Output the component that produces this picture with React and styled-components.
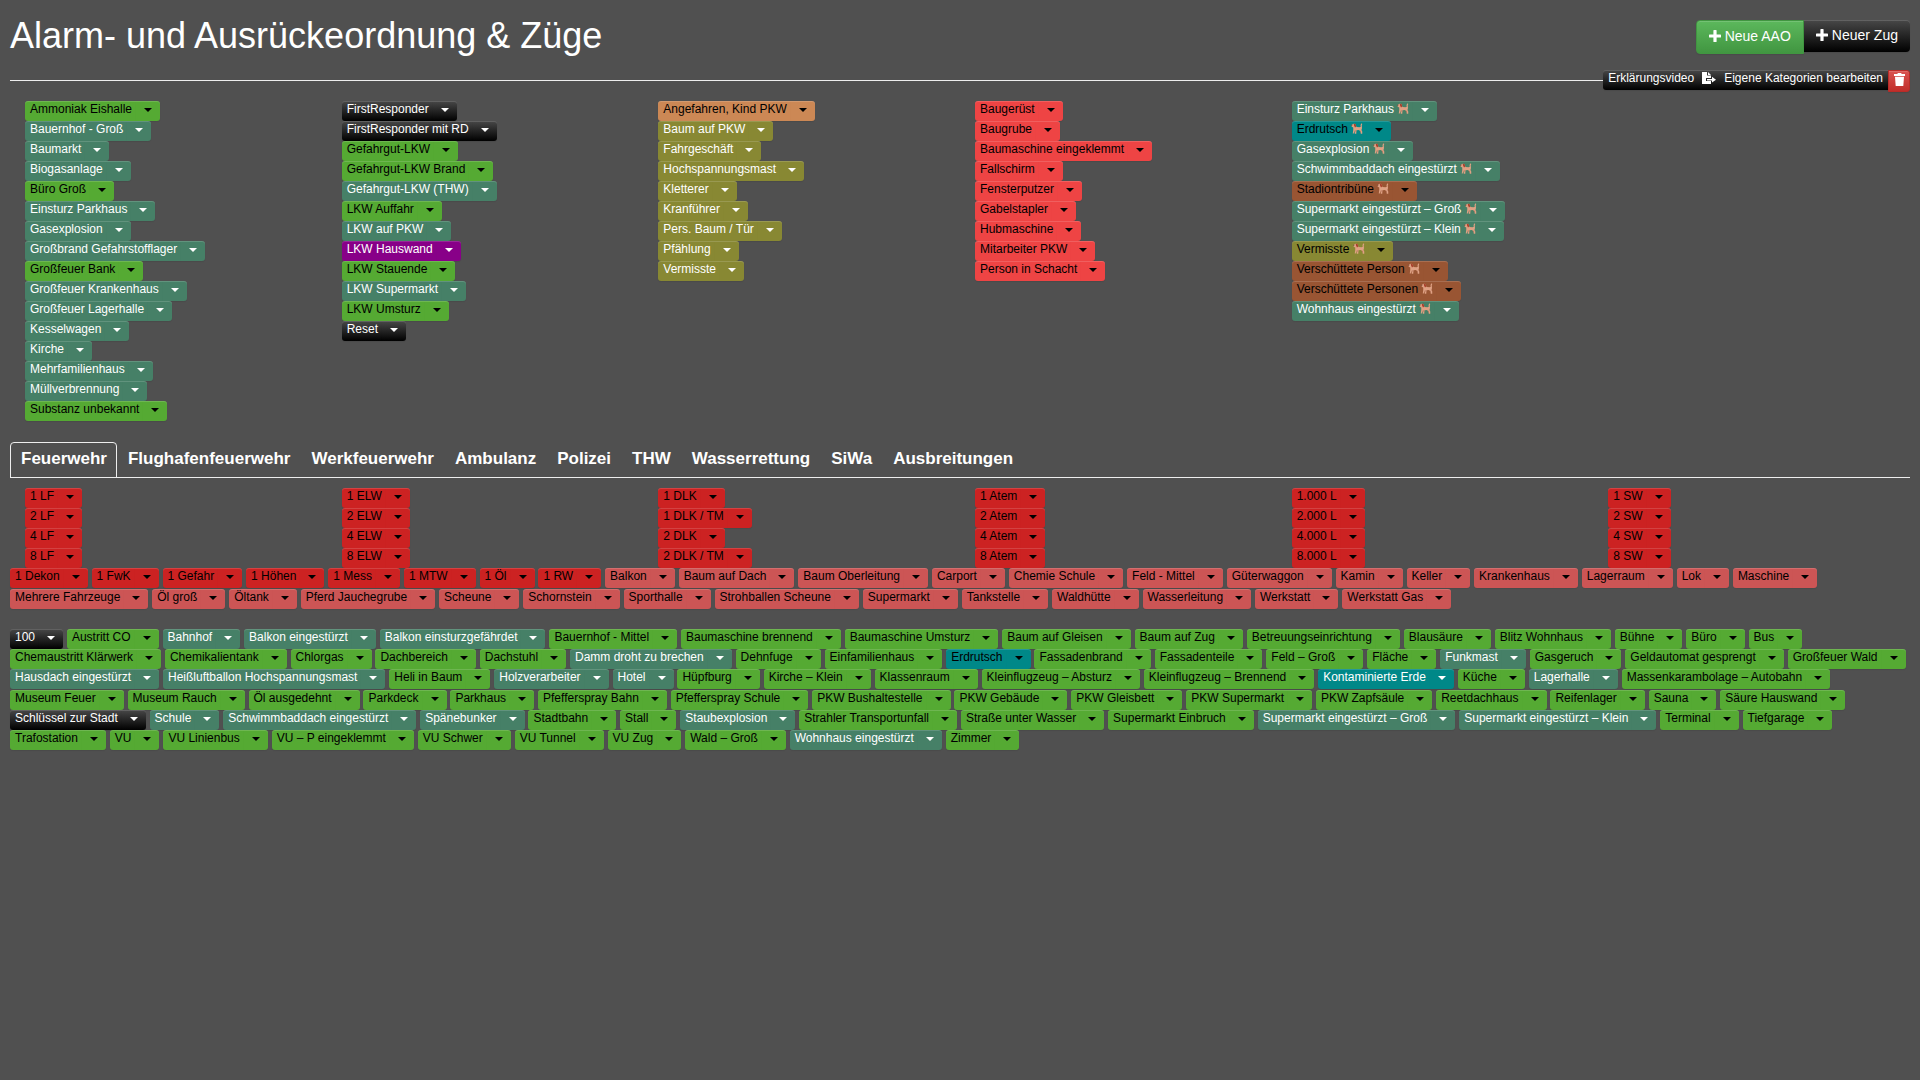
import React, { useState } from "react";
import styled, { createGlobalStyle, css } from "styled-components";

const GlobalStyle = createGlobalStyle`
  * { box-sizing: border-box; }
  body {
    margin: 0;
    background: #505050;
    color: #fff;
    font-family: "Liberation Sans", Arial, sans-serif;
    font-size: 14px;
    line-height: 20px;
  }
  button { font-family: inherit; margin: 0; border: 0; cursor: pointer; }
`;

const tones = {
  green: ["#55aa33", "#000"],
  teal: ["#468067", "#fff"],
  dark: ["linear-gradient(#484848, #000)", "#fff"],
  purple: ["#880088", "#fff"],
  orange: ["#cc8855", "#000"],
  olive: ["#888833", "#fff"],
  oliveDark: ["#888833", "#000"],
  red: ["#ee4444", "#000"],
  cyan: ["#008888", "#000"],
  cyanLight: ["#008888", "#fff"],
  brown: ["#995533", "#000"],
  crimson: ["#cc2222", "#000"],
  rose: ["#cc5555", "#000"],
};

const Page = styled.main`
  padding: 0 10px;
`;

const Header = styled.header`
  display: flex;
  justify-content: space-between;
  align-items: flex-start;
  padding: 20px 0 16px;
`;

const Title = styled.h1`
  margin: 0;
  font-size: 36px;
  line-height: 32px;
  font-weight: 400;
`;

const Actions = styled.div`
  display: flex;
  align-items: flex-start;
`;

const glossy = css`
  box-shadow: inset 0 1px 0 rgba(255, 255, 255, 0.15), 0 1px 1px rgba(0, 0, 0, 0.075);
`;

const ActionButton = styled.button`
  display: flex;
  align-items: center;
  gap: 4px;
  color: #fff;
  font-size: 14px;
  line-height: 20px;
  padding: 5px 12px 7px;
  border-radius: 0 4px 4px 0;
  background: linear-gradient(#484848, #000);
  ${glossy}
  ${(p) =>
    p.$primary &&
    css`
      border: 1px solid #419641;
      border-radius: 4px 0 0 4px;
      background: linear-gradient(#5cb85c, #419641);
    `}
`;

const RuleRow = styled.div`
  display: flex;
  align-items: flex-start;
  margin-bottom: 9px;
`;

const Rule = styled.hr`
  flex: 1;
  height: 1px;
  margin: 10px 0 0;
  border: 0;
  background: #eee;
`;

const SmallBar = styled.div`
  display: flex;
  height: 20px;
  border-radius: 3px 0 0 3px;
  background: linear-gradient(#484848, #000);
  ${glossy}
`;

const SmallButton = styled.button`
  display: flex;
  align-items: center;
  gap: 8px;
  padding: 0 5px 4px;
  background: none;
  color: #fff;
  font-size: 12px;
  line-height: 16px;
`;

const TrashButton = styled.button`
  display: grid;
  place-items: center;
  width: 22px;
  height: 22px;
  padding: 0 0 3px;
  border: 1px solid #b92c28;
  border-radius: 0 3px 3px 0;
  background: linear-gradient(#d9534f, #c12e2a);
  ${glossy}
`;

const Columns = styled.div`
  display: grid;
  grid-template-columns: repeat(6, minmax(0, 1fr));
`;

const Column = styled.div`
  padding: 0 15px;
  display: flex;
  flex-direction: column;
  align-items: flex-start;
`;

const Wrap = styled.div`
  line-height: 19px;
  margin-bottom: 20px;
`;

const Group = styled.span`
  display: inline-flex;
  vertical-align: middle;
  height: 20px;
  white-space: nowrap;
`;

const Half = styled.button`
  height: 20px;
  background: ${(p) => tones[p.$tone][0]};
  color: ${(p) => tones[p.$tone][1]};
  font-size: 12px;
  line-height: 16px;
  ${glossy}
`;

const LabelHalf = styled(Half)`
  padding: 0 4px 4px 5px;
  border-radius: 3px 0 0 3px;
`;

const CaretHalf = styled(Half)`
  display: flex;
  align-items: center;
  padding: 0 8px 2px;
  border-radius: 0 3px 3px 0;
  &::before {
    content: "";
    border-top: 4px solid;
    border-left: 4px solid transparent;
    border-right: 4px solid transparent;
  }
`;

const Tabs = styled.div`
  display: flex;
  margin: 21px 0 10px;
  border-bottom: 1px solid #eee;
`;

const Tab = styled.button`
  padding: 5px 9px 7px 10px;
  margin-bottom: -1px;
  border: 1px solid ${(p) => (p.$active ? "#eee" : "transparent")};
  border-radius: 4px 4px 0 0;
  background: none;
  color: #fff;
  font-size: 17px;
  line-height: 22px;
  font-weight: 700;
`;

const Dog = styled.svg`
  width: 12px;
  height: 11px;
  vertical-align: -1px;
`;

const DogIcon = () => (
  <Dog viewBox="0 0 24 22" role="img" aria-label="Hund">
    <path
      fill="#dfa184"
      d="M1 4L5 1.500 9 2l2 6 6 .5 2.500-1L19 4l2-3.500L22.500 2l-1 2.500L22 10l-1 4 1.500 3v4.500H19.500L19 17l-3-3-5 .5-.5 7H7.500L7 15 5.500 21H3.500l1-7L4.500 9 1.500 7.500z"
    />
    <path fill="#a8402c" d="M5.500 2L9 1.500 10.500 7 8 9 6 5z" />
    <path fill="#6b4433" d="M0.500 3.500h2V5.500h-2z" />
    <path fill="#b9765d" d="M7.500 15h3l-.5 2H7.500zM17 14.500l2.500 1.500.5 3-2-2z" />
  </Dog>
);

const withTone = (tone, spec) =>
  spec.split("|").map((entry) => {
    const [label, own] = entry.split(":");
    return { label, tone: own || tone };
  });

const categories = [
  withTone(
    "teal",
    "Ammoniak Eishalle:green|Bauernhof - Groß|Baumarkt|Biogasanlage|Büro Groß:green|Einsturz Parkhaus|Gasexplosion|Großbrand Gefahrstofflager|Großfeuer Bank:green|Großfeuer Krankenhaus|Großfeuer Lagerhalle|Kesselwagen|Kirche|Mehrfamilienhaus|Müllverbrennung|Substanz unbekannt:green"
  ),
  withTone(
    "green",
    "FirstResponder:dark|FirstResponder mit RD:dark|Gefahrgut-LKW|Gefahrgut-LKW Brand|Gefahrgut-LKW (THW):teal|LKW Auffahr|LKW auf PKW:teal|LKW Hauswand:purple|LKW Stauende|LKW Supermarkt:teal|LKW Umsturz|Reset:dark"
  ),
  withTone(
    "olive",
    "Angefahren, Kind PKW:orange|Baum auf PKW|Fahrgeschäft|Hochspannungsmast|Kletterer|Kranführer|Pers. Baum / Tür|Pfählung|Vermisste"
  ),
  withTone(
    "red",
    "Baugerüst|Baugrube|Baumaschine eingeklemmt|Fallschirm|Fensterputzer|Gabelstapler|Hubmaschine|Mitarbeiter PKW|Person in Schacht"
  ),
  withTone(
    "teal",
    "Einsturz Parkhaus|Erdrutsch:cyan|Gasexplosion|Schwimmbaddach eingestürzt|Stadiontribüne:brown|Supermarkt eingestürzt – Groß|Supermarkt eingestürzt – Klein|Vermisste:oliveDark|Verschüttete Person:brown|Verschüttete Personen:brown|Wohnhaus eingestürzt"
  ).map((item) => ({ ...item, dog: true })),
];

const vehicles = [
  "1 LF|2 LF|4 LF|8 LF",
  "1 ELW|2 ELW|4 ELW|8 ELW",
  "1 DLK|1 DLK / TM|2 DLK|2 DLK / TM",
  "1 Atem|2 Atem|4 Atem|8 Atem",
  "1.000 L|2.000 L|4.000 L|8.000 L",
  "1 SW|2 SW|4 SW|8 SW",
].map((s) => withTone("crimson", s));

const fires = [
  ...withTone("crimson", "1 Dekon|1 FwK|1 Gefahr|1 Höhen|1 Mess|1 MTW|1 Öl|1 RW"),
  ...withTone(
    "rose",
    "Balkon|Baum auf Dach|Baum Oberleitung|Carport|Chemie Schule|Feld - Mittel|Güterwaggon|Kamin|Keller|Krankenhaus|Lagerraum|Lok|Maschine|Mehrere Fahrzeuge|Öl groß|Öltank|Pferd Jauchegrube|Scheune|Schornstein|Sporthalle|Strohballen Scheune|Supermarkt|Tankstelle|Waldhütte|Wasserleitung|Werkstatt|Werkstatt Gas"
  ),
];

const incidents = withTone(
  "green",
  "100:dark|Austritt CO|Bahnhof:teal|Balkon eingestürzt:teal|Balkon einsturzgefährdet:teal|Bauernhof - Mittel|Baumaschine brennend|Baumaschine Umsturz|Baum auf Gleisen|Baum auf Zug|Betreuungseinrichtung|Blausäure|Blitz Wohnhaus|Bühne|Büro|Bus|" +
    "Chemaustritt Klärwerk|Chemikalientank|Chlorgas|Dachbereich|Dachstuhl|Damm droht zu brechen:teal|Dehnfuge|Einfamilienhaus|Erdrutsch:cyan|Fassadenbrand|Fassadenteile|Feld – Groß|Fläche|Funkmast:teal|Gasgeruch|Geldautomat gesprengt|Großfeuer Wald|" +
    "Hausdach eingestürzt:teal|Heißluftballon Hochspannungsmast:teal|Heli in Baum|Holzverarbeiter:teal|Hotel:teal|Hüpfburg|Kirche – Klein|Klassenraum|Kleinflugzeug – Absturz|Kleinflugzeug – Brennend|Kontaminierte Erde:cyanLight|Küche|Lagerhalle:teal|Massenkarambolage – Autobahn|" +
    "Museum Feuer|Museum Rauch|Öl ausgedehnt|Parkdeck|Parkhaus|Pfefferspray Bahn|Pfefferspray Schule|PKW Bushaltestelle|PKW Gebäude|PKW Gleisbett|PKW Supermarkt|PKW Zapfsäule|Reetdachhaus|Reifenlager|Sauna|Säure Hauswand|" +
    "Schlüssel zur Stadt:dark|Schule:teal|Schwimmbaddach eingestürzt:teal|Spänebunker:teal|Stadtbahn|Stall|Staubexplosion:teal|Strahler Transportunfall|Straße unter Wasser|Supermarkt Einbruch|Supermarkt eingestürzt – Groß:teal|Supermarkt eingestürzt – Klein:teal|Terminal|Tiefgarage|" +
    "Trafostation|VU|VU Linienbus|VU – P eingeklemmt|VU Schwer|VU Tunnel|VU Zug|Wald – Groß|Wohnhaus eingestürzt:teal|Zimmer"
);

const tabs = [
  "Feuerwehr",
  "Flughafenfeuerwehr",
  "Werkfeuerwehr",
  "Ambulanz",
  "Polizei",
  "THW",
  "Wasserrettung",
  "SiWa",
  "Ausbreitungen",
];

function PlanButton({ label, tone, dog }) {
  return (
    <Group>
      <LabelHalf $tone={tone}>
        {label}
        {dog && (
          <>
            {" "}
            <DogIcon />
          </>
        )}
      </LabelHalf>
      <CaretHalf $tone={tone} aria-label={`${label} Optionen`} />
    </Group>
  );
}

function PlanColumns({ columns }) {
  return (
    <Columns>
      {columns.map((items, i) => (
        <Column key={i}>
          {items.map((item) => (
            <PlanButton key={item.label} {...item} />
          ))}
        </Column>
      ))}
    </Columns>
  );
}

function PlanFlow({ items }) {
  return (
    <Wrap>
      {items.map((item) => (
        <React.Fragment key={item.label}>
          <PlanButton {...item} />{" "}
        </React.Fragment>
      ))}
    </Wrap>
  );
}

const PlusIcon = () => (
  <svg width="12" height="12" viewBox="0 0 12 12" fill="#fff" aria-hidden="true">
    <path d="M5 0h2q.6 0 .6.6v3.800h3.800q.6 0 .6.6v2q0 .6-.6.6H7.600v3.800q0 .6-.6.6H5q-.6 0-.6-.6V7.600H.6Q0 7.600 0 7V5q0-.6.6-.6h3.800V.6Q4.400 0 5 0z" />
  </svg>
);

export default function App() {
  const [active, setActive] = useState(tabs[0]);
  return (
    <Page>
      <GlobalStyle />
      <Header>
        <Title>Alarm- und Ausrückeordnung &amp; Züge</Title>
        <Actions>
          <ActionButton $primary>
            <PlusIcon />
            Neue AAO
          </ActionButton>
          <ActionButton>
            <PlusIcon />
            Neuer Zug
          </ActionButton>
        </Actions>
      </Header>
      <RuleRow>
        <Rule />
        <SmallBar>
          <SmallButton>
            Erklärungsvideo
            <svg width="14" height="12" viewBox="0 0 14 12" aria-hidden="true">
              <path fill="#fff" d="M0 0h5v3.500h4V6H4v3h5v3H0z" />
              <path fill="#fff" d="M6 0l3 3H6zM10 4.800l4 2.900-4 2.900V8.500H5V7h5z" />
            </svg>
            Eigene Kategorien bearbeiten
          </SmallButton>
        </SmallBar>
        <TrashButton aria-label="Löschen">
          <svg width="11" height="13" viewBox="0 0 11 13" fill="#fff" aria-hidden="true">
            <path d="M0 1h3.300l.6-1h3.200l.6 1H11v2H0zM1 3.800h9L9.300 13H1.700z" />
          </svg>
        </TrashButton>
      </RuleRow>
      <PlanColumns columns={categories} />
      <Tabs role="tablist">
        {tabs.map((name) => (
          <Tab
            key={name}
            role="tab"
            aria-selected={name === active}
            $active={name === active}
            onClick={() => setActive(name)}
          >
            {name}
          </Tab>
        ))}
      </Tabs>
      <PlanColumns columns={vehicles} />
      <PlanFlow items={fires} />
      <PlanFlow items={incidents} />
    </Page>
  );
}
